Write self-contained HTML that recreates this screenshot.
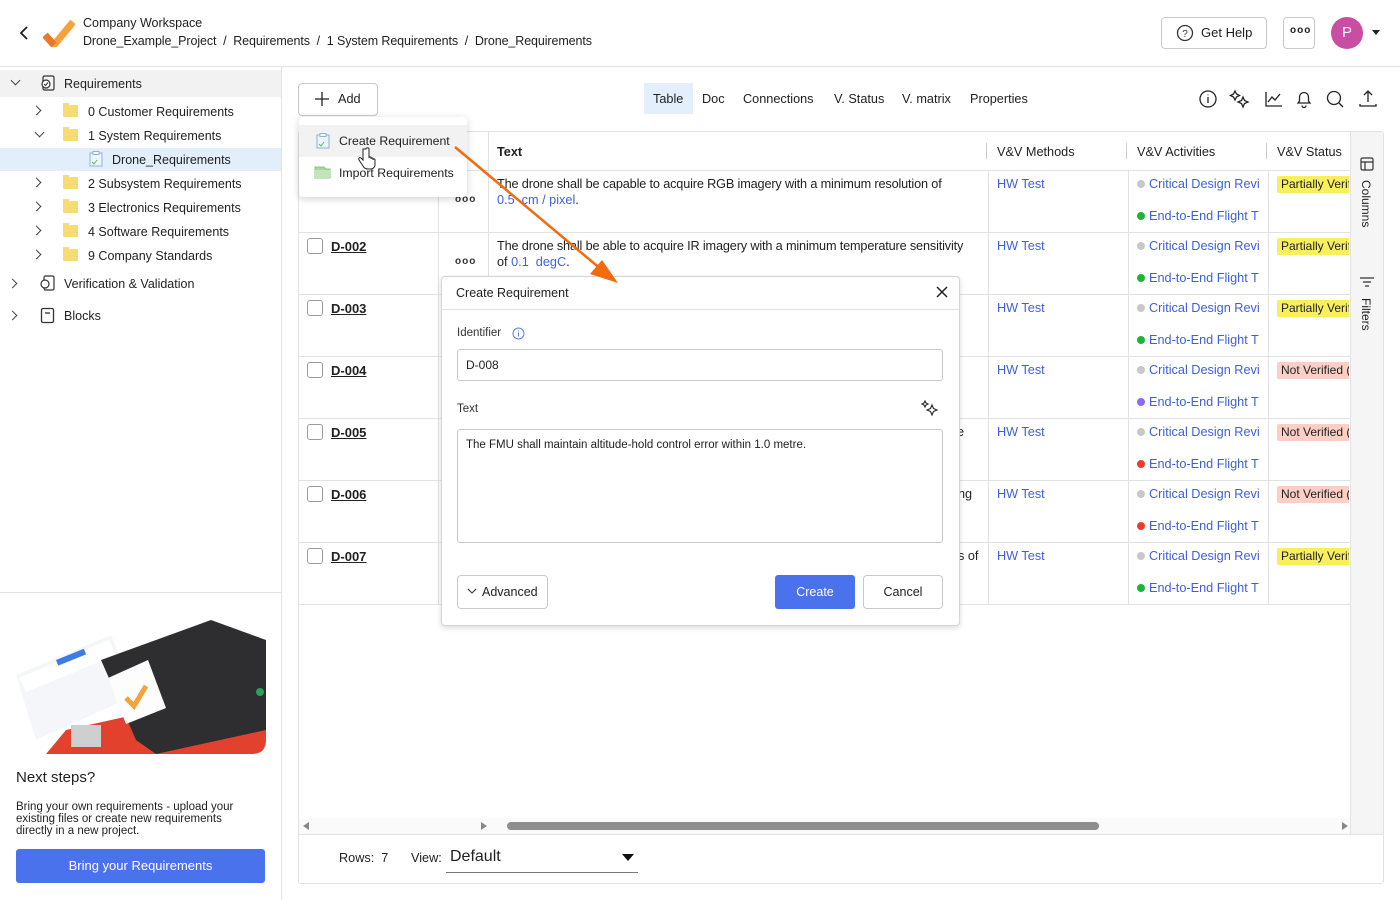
<!DOCTYPE html>
<html><head><meta charset="utf-8"><style>
*{box-sizing:border-box;margin:0;padding:0}
body{width:1400px;height:900px;overflow:hidden;background:#fff;font-family:"Liberation Sans",sans-serif;color:#1f1f1f;position:relative;font-size:12.7px}
.a{position:absolute}
.t{position:absolute;white-space:nowrap}
.link{color:#3f5fe0}
.hr{position:absolute;height:1px;background:#e2e2e2}
.vr{position:absolute;width:1px;background:#e2e2e2}
.chev{position:absolute;width:7px;height:7px;border-right:1.5px solid #444;border-bottom:1.5px solid #444}
.folder{position:absolute;width:15px;height:12px;background:#f7dc75;border-radius:1px}
.folder:before{content:"";position:absolute;left:0;top:-2px;width:6px;height:3px;background:#f7dc75}
.cb{position:absolute;width:16px;height:16px;border:1px solid #9a9a9a;border-radius:3px;background:#fff}
.id{position:absolute;font-weight:bold;text-decoration:underline;font-size:13px}
.dots{position:absolute;font-size:10px;letter-spacing:1px;color:#333;font-weight:bold}
.dot{display:inline-block;width:8px;height:8px;border-radius:50%;margin-right:4px;vertical-align:0}
.st{position:absolute;height:17px;padding:1px 4px;font-size:12px;overflow:hidden;width:72px;white-space:nowrap;border-radius:2px 0 0 2px}
.pv{background:#f7ef5e}.nv{background:#fbcfc5}
.btn{position:absolute;border:1px solid #c9c9c9;border-radius:4px;background:#fff}
.side .t{font-size:12.5px}
</style></head><body>

<!-- Header -->
<svg class="a" style="left:18px;top:26px" width="12" height="14"><path d="M9 1L3 7l6 6" stroke="#222" stroke-width="1.8" fill="none"/></svg>
<svg class="a" style="left:43px;top:19px" width="32" height="28"><path d="M2 16l9 10L30 3" stroke="#f6a23a" stroke-width="7" fill="none" stroke-linejoin="miter"/><path d="M2 16l9 10" stroke="#e8792a" stroke-width="7" fill="none"/></svg>
<div class="t" style="left:83px;top:16px;font-size:12.5px">Company Workspace</div>
<div class="t" style="left:83px;top:34px;font-size:12.5px;letter-spacing:-0.1px">Drone_Example_Project &nbsp;/&nbsp; Requirements &nbsp;/&nbsp; 1 System Requirements &nbsp;/&nbsp; Drone_Requirements</div>
<div class="btn" style="left:1161px;top:17px;width:106px;height:32px"></div>
<svg class="a" style="left:1176px;top:24px" width="18" height="18"><circle cx="9" cy="9" r="7.5" stroke="#333" stroke-width="1.3" fill="none"/><text x="9" y="13" font-size="10" text-anchor="middle" fill="#333" font-family="Liberation Sans">?</text></svg>
<div class="t" style="left:1201px;top:25px;font-size:13px">Get Help</div>
<div class="btn" style="left:1283px;top:17px;width:32px;height:32px"></div>
<div class="t" style="left:1290px;top:25px;font-size:10px;letter-spacing:1px;font-weight:bold">ooo</div>
<div class="a" style="left:1331px;top:17px;width:32px;height:32px;border-radius:50%;background:#c94da3;color:#fff;font-size:15px;text-align:center;line-height:32px">P</div>
<svg class="a" style="left:1372px;top:30px" width="8" height="6"><path d="M0 0h8L4 5z" fill="#222"/></svg>
<div class="hr" style="left:0;top:66px;width:1400px"></div>

<!-- Sidebar -->
<div class="side">
<div class="vr" style="left:281px;top:66px;height:834px"></div>
<div class="a" style="left:0;top:70px;width:281px;height:27px;background:#f2f2f2"></div>
<div class="a" style="left:0;top:148px;width:281px;height:23px;background:#e3eefb"></div>
<div class="chev" style="left:12px;top:77px;transform:rotate(45deg)"></div>
<svg class="a" style="left:39px;top:74px" width="18" height="18"><rect x="4" y="2" width="11" height="14" rx="1.5" stroke="#333" fill="none" stroke-width="1.2"/><circle cx="7" cy="10" r="4" stroke="#333" fill="#fff" stroke-width="1.2"/><path d="M5 10l1.5 1.5L9 8.5" stroke="#333" fill="none"/></svg>
<div class="t" style="left:64px;top:77px">Requirements</div>
<div class="chev" style="left:33px;top:107px;transform:rotate(-45deg)"></div><div class="folder" style="left:63px;top:105px"></div><div class="t" style="left:88px;top:105px">0 Customer Requirements</div>
<div class="chev" style="left:36px;top:129px;transform:rotate(45deg)"></div><div class="folder" style="left:63px;top:129px"></div><div class="t" style="left:88px;top:129px">1 System Requirements</div>
<svg class="a" style="left:89px;top:151px" width="14" height="16"><rect x="1" y="2" width="12" height="13" fill="#eef4fb" stroke="#8fb0d8"/><rect x="4" y="0.5" width="6" height="3" fill="#fff" stroke="#8fb0d8"/><path d="M3 11l2 2 3-4" stroke="#5cb85c" fill="none"/></svg>
<div class="t" style="left:112px;top:153px">Drone_Requirements</div>
<div class="chev" style="left:33px;top:179px;transform:rotate(-45deg)"></div><div class="folder" style="left:63px;top:177px"></div><div class="t" style="left:88px;top:177px">2 Subsystem Requirements</div>
<div class="chev" style="left:33px;top:203px;transform:rotate(-45deg)"></div><div class="folder" style="left:63px;top:201px"></div><div class="t" style="left:88px;top:201px">3 Electronics Requirements</div>
<div class="chev" style="left:33px;top:227px;transform:rotate(-45deg)"></div><div class="folder" style="left:63px;top:225px"></div><div class="t" style="left:88px;top:225px">4 Software Requirements</div>
<div class="chev" style="left:33px;top:251px;transform:rotate(-45deg)"></div><div class="folder" style="left:63px;top:249px"></div><div class="t" style="left:88px;top:249px">9 Company Standards</div>
<div class="chev" style="left:9px;top:280px;transform:rotate(-45deg)"></div>
<svg class="a" style="left:39px;top:274px" width="18" height="18"><rect x="5" y="2" width="10" height="14" rx="1.5" stroke="#333" fill="none" stroke-width="1.2"/><circle cx="6" cy="10" r="4" stroke="#333" fill="#fff" stroke-width="1.2"/></svg>
<div class="t" style="left:64px;top:277px">Verification &amp; Validation</div>
<div class="chev" style="left:9px;top:312px;transform:rotate(-45deg)"></div>
<svg class="a" style="left:39px;top:307px" width="18" height="18"><rect x="2.5" y="1.5" width="12" height="14" rx="1.5" stroke="#333" fill="none" stroke-width="1.3"/><path d="M6 6h5" stroke="#333" stroke-width="1.3"/></svg>
<div class="t" style="left:64px;top:309px">Blocks</div>
</div>

<div class="hr" style="left:0;top:592px;width:281px"></div>
<!-- promo image -->
<svg class="a" style="left:16px;top:620px" width="250" height="134" viewBox="0 0 250 134">
<defs><clipPath id="c"><path d="M0 0H250V120Q250 134 236 134H0Z"/></clipPath></defs>
<g clip-path="url(#c)">
<polygon points="30,134 50,110 140,90 250,100 250,134" fill="#e2412d"/>
<polygon points="0,55 95,15 120,75 20,120" fill="#f4f6f9"/>
<polygon points="3,58 93,20 100,35 10,72" fill="#ffffff"/>
<rect x="40" y="40" width="30" height="6" fill="#3d7ce8" transform="rotate(-22 40 40)"/>
<polygon points="85,40 195,0 250,20 250,110 140,134 120,120" fill="#2e2e30"/>
<polygon points="92,58 132,40 150,88 110,104" fill="#fdfdfd"/>
<path d="M110 78l8 8 12-20" stroke="#f6a23a" stroke-width="5" fill="none"/>
<rect x="55" y="105" width="30" height="22" fill="#cfcfcf"/>
<circle cx="244" cy="72" r="4" fill="#2aa05a"/>
</g></svg>
<div class="t" style="left:16px;top:769px;font-size:15px">Next steps?</div>
<div class="a" style="left:16px;top:801px;width:235px;font-size:11.5px;line-height:12px">Bring your own requirements - upload your existing files or create new requirements directly in a new project.</div>
<div class="a" style="left:16px;top:849px;width:249px;height:34px;background:#4a72ec;border-radius:3px;color:#fff;text-align:center;line-height:34px;font-size:13px">Bring your Requirements</div>

<!-- toolbar -->
<div class="btn" style="left:298px;top:83px;width:80px;height:33px"></div>
<svg class="a" style="left:314px;top:91px" width="16" height="16"><path d="M8 1v14M1 8h14" stroke="#222" stroke-width="1.3"/></svg>
<div class="t" style="left:338px;top:92px">Add</div>
<div class="a" style="left:644px;top:83px;width:49px;height:31px;background:#e3effb"></div>
<div class="t" style="left:653px;top:92px">Table</div>
<div class="t" style="left:702px;top:92px">Doc</div>
<div class="t" style="left:743px;top:92px">Connections</div>
<div class="t" style="left:834px;top:92px">V. Status</div>
<div class="t" style="left:902px;top:92px">V. matrix</div>
<div class="t" style="left:970px;top:92px">Properties</div>
<svg class="a" style="left:1198px;top:89px" width="185" height="20" fill="none" stroke="#222" stroke-width="1.3">
<circle cx="10" cy="10" r="8"/><path d="M10 8v6M10 5.5v.8"/>
<path d="M37 2l1.5 3 3 1.5-3 1.5L37 11l-1.5-3-3-1.5 3-1.5zM45 8l1.5 3.5 3.5 1.5-3.5 1.5L45 18l-1.5-3.5L40 13l3.5-1.5z"/>
<path d="M68 3v14h16M70 13l4-5 3 3 5-6"/>
<path d="M100 14h12l-1.5-2V8a4.5 4.5 0 0 0-9 0v4zM104 16.5a2 2 0 0 0 4 0"/>
<circle cx="136" cy="9" r="6.5"/><path d="M141 14l4 4"/>
<path d="M170 2v11M166 6l4-4 4 4M162 15v2h16v-2"/>
</svg>

<!-- table -->
<div class="a" style="left:298px;top:131px;width:1086px;height:753px;border:1px solid #e2e2e2;border-radius:3px"></div>
<div class="a" style="left:1350px;top:132px;width:33px;height:702px;background:#f5f5f5;border-left:1px solid #e2e2e2"></div>
<svg class="a" style="left:1359px;top:156px" width="16" height="16" fill="none" stroke="#333" stroke-width="1.2"><rect x="2" y="2" width="12" height="12" rx="1.5"/><path d="M2 6h12M6 6v8"/></svg>
<div class="t" style="top:180px;transform:rotate(90deg);transform-origin:0 0;left:1373px;font-size:12px">Columns</div>
<svg class="a" style="left:1359px;top:276px" width="16" height="12" stroke="#333" stroke-width="1.2"><path d="M1 2h14M4 6h8M6 10h4"/></svg>
<div class="t" style="left:1373px;top:298px;transform:rotate(90deg);transform-origin:0 0;font-size:12px">Filters</div>

<div class="hr" style="left:299px;top:170px;width:1051px"></div>
<div class="vr" style="left:438px;top:132px;height:472px"></div>
<div class="vr" style="left:488px;top:132px;height:472px"></div>
<div class="vr" style="left:988px;top:170px;height:434px"></div>
<div class="vr" style="left:1128px;top:170px;height:434px"></div>
<div class="vr" style="left:1268px;top:170px;height:434px"></div>
<div class="vr" style="left:986px;top:143px;height:16px;background:#ccc"></div>
<div class="vr" style="left:1126px;top:143px;height:16px;background:#ccc"></div>
<div class="vr" style="left:1266px;top:143px;height:16px;background:#ccc"></div>
<div class="t" style="left:497px;top:145px;font-weight:bold">Text</div>
<div class="t" style="left:997px;top:145px">V&amp;V Methods</div>
<div class="t" style="left:1137px;top:145px">V&amp;V Activities</div>
<div class="t" style="left:1277px;top:145px">V&amp;V Status</div>

<!-- rows -->
<div class="hr" style="left:299px;top:232px;width:1051px"></div>
<div class="hr" style="left:299px;top:294px;width:1051px"></div>
<div class="hr" style="left:299px;top:356px;width:1051px"></div>
<div class="hr" style="left:299px;top:418px;width:1051px"></div>
<div class="hr" style="left:299px;top:480px;width:1051px"></div>
<div class="hr" style="left:299px;top:542px;width:1051px"></div>
<div class="hr" style="left:299px;top:604px;width:1051px"></div>

<div class="dots" style="left:455px;top:194px">ooo</div>
<div class="t" style="left:497px;top:177px;letter-spacing:-0.15px">The drone shall be capable to acquire RGB imagery with a minimum resolution of</div>
<div class="t" style="left:497px;top:193px"><span class="link">0.5 &nbsp;cm / pixel</span>.</div>

<div class="cb" style="left:307px;top:238px"></div><div class="id" style="left:331px;top:239px">D-002</div>
<div class="dots" style="left:455px;top:256px">ooo</div>
<div class="t" style="left:497px;top:239px;letter-spacing:-0.15px">The drone shall be able to acquire IR imagery with a minimum temperature sensitivity</div>
<div class="t" style="left:497px;top:255px">of <span class="link">0.1 &nbsp;degC</span>.</div>

<div class="cb" style="left:307px;top:300px"></div><div class="id" style="left:331px;top:301px">D-003</div>
<div class="cb" style="left:307px;top:362px"></div><div class="id" style="left:331px;top:363px">D-004</div>
<div class="cb" style="left:307px;top:424px"></div><div class="id" style="left:331px;top:425px">D-005</div>
<div class="cb" style="left:307px;top:486px"></div><div class="id" style="left:331px;top:487px">D-006</div>
<div class="cb" style="left:307px;top:548px"></div><div class="id" style="left:331px;top:549px">D-007</div>
<div class="t" style="left:957px;top:425px">e</div>
<div class="t" style="left:958px;top:487px">ng</div>
<div class="t" style="left:958px;top:549px">s of</div>

<!-- methods/activities/status -->
<div class="t link" style="left:997px;top:177px">HW Test</div><div class="t link" style="left:997px;top:239px">HW Test</div><div class="t link" style="left:997px;top:301px">HW Test</div><div class="t link" style="left:997px;top:363px">HW Test</div><div class="t link" style="left:997px;top:425px">HW Test</div><div class="t link" style="left:997px;top:487px">HW Test</div><div class="t link" style="left:997px;top:549px">HW Test</div>

<div class="t link" style="left:1137px;top:177px"><span class="dot" style="background:#c8c8c8"></span>Critical Design Revi</div>
<div class="t link" style="left:1137px;top:209px"><span class="dot" style="background:#1bb53c"></span>End-to-End Flight T</div>
<div class="t link" style="left:1137px;top:239px"><span class="dot" style="background:#c8c8c8"></span>Critical Design Revi</div>
<div class="t link" style="left:1137px;top:271px"><span class="dot" style="background:#1bb53c"></span>End-to-End Flight T</div>
<div class="t link" style="left:1137px;top:301px"><span class="dot" style="background:#c8c8c8"></span>Critical Design Revi</div>
<div class="t link" style="left:1137px;top:333px"><span class="dot" style="background:#1bb53c"></span>End-to-End Flight T</div>
<div class="t link" style="left:1137px;top:363px"><span class="dot" style="background:#c8c8c8"></span>Critical Design Revi</div>
<div class="t link" style="left:1137px;top:395px"><span class="dot" style="background:#8b6cf0"></span>End-to-End Flight T</div>
<div class="t link" style="left:1137px;top:425px"><span class="dot" style="background:#c8c8c8"></span>Critical Design Revi</div>
<div class="t link" style="left:1137px;top:457px"><span class="dot" style="background:#ee3b2b"></span>End-to-End Flight T</div>
<div class="t link" style="left:1137px;top:487px"><span class="dot" style="background:#c8c8c8"></span>Critical Design Revi</div>
<div class="t link" style="left:1137px;top:519px"><span class="dot" style="background:#ee3b2b"></span>End-to-End Flight T</div>
<div class="t link" style="left:1137px;top:549px"><span class="dot" style="background:#c8c8c8"></span>Critical Design Revi</div>
<div class="t link" style="left:1137px;top:581px"><span class="dot" style="background:#1bb53c"></span>End-to-End Flight T</div>

<div class="st pv" style="left:1277px;top:176px">Partially Verified</div>
<div class="st pv" style="left:1277px;top:238px">Partially Verified</div>
<div class="st pv" style="left:1277px;top:300px">Partially Verified</div>
<div class="st nv" style="left:1277px;top:362px">Not Verified (</div>
<div class="st nv" style="left:1277px;top:424px">Not Verified (</div>
<div class="st nv" style="left:1277px;top:486px">Not Verified (</div>
<div class="st pv" style="left:1277px;top:548px">Partially Verified</div>

<!-- scrollbar -->
<div class="a" style="left:299px;top:818px;width:1051px;height:16px;background:#fafafa"></div>
<svg class="a" style="left:303px;top:821px" width="1045" height="10"><path d="M0 5l6-4v8z" fill="#888"/><path d="M184 5l-6-4v8z" fill="#888"/><path d="M1045 5l-6-4v8z" fill="#888"/><rect x="204" y="1" width="592" height="8" rx="4" fill="#8e8e8e"/></svg>
<div class="hr" style="left:299px;top:834px;width:1085px"></div>
<div class="t" style="left:339px;top:851px">Rows: &nbsp;7</div>
<div class="t" style="left:411px;top:851px">View:</div>
<div class="t" style="left:450px;top:848px;font-size:16px">Default</div>
<svg class="a" style="left:622px;top:854px" width="12" height="8"><path d="M0 0h12L6 7z" fill="#111"/></svg>
<div class="a" style="left:446px;top:872px;width:192px;height:1px;background:#777"></div>

<!-- dropdown menu -->
<div class="a" style="left:299px;top:117px;width:168px;height:80px;background:#fff;border-radius:4px;box-shadow:0 2px 8px rgba(0,0,0,.18)"></div>
<div class="a" style="left:299px;top:125px;width:168px;height:32px;background:#f2f2f2"></div>
<svg class="a" style="left:316px;top:133px" width="14" height="16"><rect x="1" y="2" width="12" height="13" fill="#eef4fb" stroke="#8fb0d8"/><rect x="4" y="0.5" width="6" height="3" fill="#fff" stroke="#8fb0d8"/><path d="M3 11l2 2 3-4" stroke="#5cb85c" fill="none"/></svg>
<div class="t" style="left:339px;top:134px;font-size:12.3px">Create Requirement</div>
<svg class="a" style="left:314px;top:165px" width="17" height="14"><path d="M1 2h9l2 2h4v9H1z" fill="#a9d59f" stroke="#8fc487"/><rect x="1" y="5" width="15" height="8" fill="#c3e4bb"/></svg>
<div class="t" style="left:339px;top:166px;font-size:12.3px">Import Requirements</div>
<svg class="a" style="left:357px;top:147px" width="20" height="24"><path d="M6 2v11l-2-2c-1.5-1-3 .5-2 2l4 6c1 2 3 3 5 3h3c2 0 4-2 4-4v-5c0-1.5-2-1.5-2 0v-1c0-1.5-2-1.5-2 0v-1c0-1.5-2-1.5-2 0V2c0-1.5-3-1.5-3 0z" fill="#fff" stroke="#222" stroke-width="1"/></svg>

<!-- modal -->
<div class="a" style="left:441px;top:276px;width:519px;height:350px;background:#fff;border:1px solid #d5d5d5;border-radius:4px;box-shadow:0 2px 6px rgba(0,0,0,.15)"></div>
<div class="t" style="left:456px;top:286px;font-size:12.5px">Create Requirement</div>
<svg class="a" style="left:936px;top:286px" width="12" height="12"><path d="M1 1l10 10M11 1L1 11" stroke="#222" stroke-width="1.5"/></svg>
<div class="hr" style="left:442px;top:309px;width:517px"></div>
<div class="t" style="left:457px;top:327px;font-size:11.5px;color:#333">Identifier</div>
<svg class="a" style="left:512px;top:327px" width="13" height="13"><circle cx="6.5" cy="6.5" r="5.5" stroke="#5b7ee8" fill="none"/><path d="M6.5 5.5v4M6.5 3.5v.8" stroke="#5b7ee8"/></svg>
<div class="a" style="left:457px;top:349px;width:486px;height:32px;border:1px solid #c8c8c8;border-radius:3px"></div>
<div class="t" style="left:466px;top:358px;font-size:12px">D-008</div>
<div class="t" style="left:457px;top:403px;font-size:11.5px;color:#333">Text</div>
<svg class="a" style="left:921px;top:400px" width="18" height="18" fill="none" stroke="#222" stroke-width="1.1"><path d="M4 1l1 2 2 1-2 1-1 2-1-2-2-1 2-1zM11 5l1.5 3.5L16 10l-3.5 1.5L11 15l-1.5-3.5L6 10l3.5-1.5z"/></svg>
<div class="a" style="left:457px;top:429px;width:486px;height:114px;border:1px solid #c8c8c8;border-radius:3px"></div>
<div class="t" style="left:466px;top:439px;font-size:11.5px">The FMU shall maintain altitude-hold control error within 1.0 metre.</div>
<div class="btn" style="left:457px;top:575px;width:91px;height:34px"></div>
<svg class="a" style="left:467px;top:588px" width="10" height="7"><path d="M1 1l4 4 4-4" stroke="#333" fill="none" stroke-width="1.1"/></svg>
<div class="t" style="left:482px;top:585px;font-size:12.5px">Advanced</div>
<div class="a" style="left:775px;top:575px;width:80px;height:34px;background:#4a72ec;border-radius:3px;color:#fff;text-align:center;line-height:34px;font-size:12.5px">Create</div>
<div class="btn" style="left:863px;top:575px;width:80px;height:34px;text-align:center;line-height:32px;font-size:12.5px">Cancel</div>

<!-- arrow -->
<svg class="a" style="left:440px;top:130px" width="200" height="170"><path d="M15 17L162 140" stroke="#f26b10" stroke-width="2.5"/><path d="M178 153L150 144 162 130z" fill="#f26b10"/></svg>
</body></html>
